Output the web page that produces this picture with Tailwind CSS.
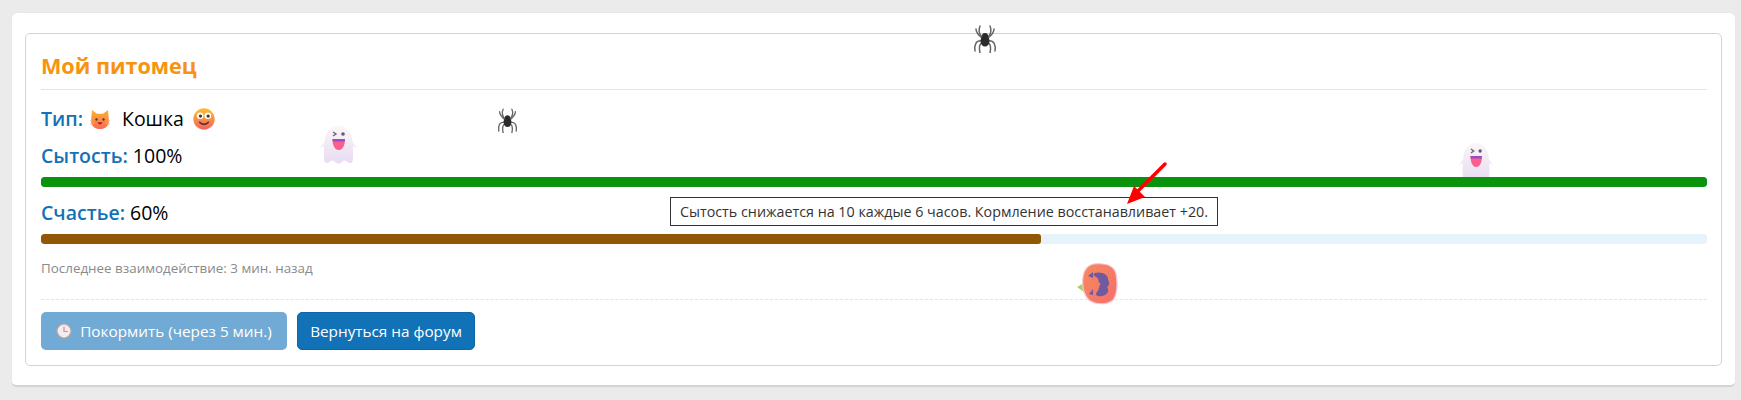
<!DOCTYPE html>
<html lang="ru">
  <head>
    <meta charset="UTF-8" />
    <meta name="viewport" content="width=device-width, initial-scale=1.0" />
    <title>Мой питомец</title>
    <script src="https://cdn.jsdelivr.net/npm/@tailwindcss/browser@4"></script>
  </head>
  <body class="relative h-[400px] overflow-hidden bg-[#ebebeb] pt-[13px] pr-[6px] pl-[12px] font-['Open_Sans','Noto_Sans',sans-serif] text-black">
    <svg class="absolute h-0 w-0">
      <defs>
        <linearGradient id="ghost-fill" x1="0" y1="0" x2="0" y2="1">
          <stop offset="0" stop-color="#faf6f8" />
          <stop offset="1" stop-color="#e8dcf2" />
        </linearGradient>
        <linearGradient id="pumpkin-fill" x1="0" y1="0" x2="1" y2="1">
          <stop offset="0" stop-color="#f58a5e" />
          <stop offset="1" stop-color="#f56f6c" />
        </linearGradient>
        <symbol id="ghost" viewBox="0 0 37 38" preserveAspectRatio="none">
          <path d="M4 20L0 22L4.500 16C5 6 11 0 18.500 0C26 0 32 6 32.500 16L37 22L33 20V32C33 38 30 38 27 35.500C25 34 24 34 22 36C20 38 17 38 15 36C13 34 12 34 10 35.500C7 38 4 38 4 32Z" fill="url(#ghost-fill)" />
          <path d="M13 6L16 8L13 10" fill="none" stroke="#6b6570" stroke-width="1.400" />
          <circle cx="23" cy="8" r="1.800" fill="#5f5a66" />
          <path d="M12.500 13H25C25 19 23 24 18.700 24C14.500 24 12.500 19 12.500 13Z" fill="#fb5f8c" />
          <path d="M12.500 13H25L24.700 15.500H12.800Z" fill="#9b4dc4" />
        </symbol>
        <symbol id="spider" viewBox="0 0 24 28">
          <g fill="none" stroke="#666" stroke-width="1.500" stroke-linecap="round">
            <path d="M9 12C6 9 5 6 7 1" />
            <path d="M15 12C18 9 19 6 17 1" />
            <path d="M9 13C4 9 3 7 3 4" />
            <path d="M15 13C20 9 21 7 21 4" />
            <path d="M9 16C3 15 1 20 2 26" />
            <path d="M15 16C21 15 23 20 22 26" />
            <path d="M9 18C6 19 6 23 7 28" />
            <path d="M15 18C18 19 18 23 17 28" />
          </g>
          <circle cx="12" cy="11" r="3" fill="#2b2b2b" />
          <ellipse cx="12" cy="16" rx="4.500" ry="5.500" fill="#2b2b2b" />
        </symbol>
      </defs>
    </svg>

    <div class="h-[374px] rounded-[5px] border-b-2 border-[#d4d4d4] bg-white px-[13px] pt-[20px] shadow-[0_0_1px_#ccc]">
      <section class="h-[333px] rounded-[5px] border border-[#d3d3d3] pt-[13px] pr-[14px] pl-[15px]">
        <h2 class="border-b border-[#e4e4e4] pb-[5px] text-[21.6px] leading-[37px] font-bold text-[#f7930f]">Мой питомец</h2>

        <p class="mt-[15px] flex h-[28px] items-center text-[19.5px]">
          <span class="font-semibold text-[#1272b8]">Тип:</span>
          <svg class="ml-[7px] h-[19px] w-[20px]" viewBox="0 0 20 20" preserveAspectRatio="none">
            <linearGradient id="cat-fill" x1="0" y1="0" x2="0" y2="1">
              <stop offset="0" stop-color="#fdb22c" />
              <stop offset="1" stop-color="#fb6a54" />
            </linearGradient>
            <path d="M2 0L7 4H13L18 0L19 12C18.500 17 15 20 10 20C5 20 1.500 17 1 12Z" fill="url(#cat-fill)" />
            <circle cx="6.500" cy="10" r="1.200" fill="#5a3320" />
            <circle cx="13.500" cy="10" r="1.200" fill="#5a3320" />
            <path d="M7.500 13C8.500 16 11.500 16 12.500 13Z" fill="#a3213d" />
            <path d="M0 11L4 12M0 15L4 14M20 11L16 12M20 15L16 14" stroke="#f6b183" stroke-width="0.800" />
          </svg>
          <span class="ml-[12px]">Кошка</span>
          <svg class="ml-[9px] h-[22px] w-[22px]" viewBox="0 0 20 20">
            <linearGradient id="smile-fill" x1="0" y1="0" x2="0" y2="1">
              <stop offset="0" stop-color="#fcc02e" />
              <stop offset="1" stop-color="#f4625f" />
            </linearGradient>
            <circle cx="10" cy="10" r="9.700" fill="url(#smile-fill)" />
            <circle cx="6.500" cy="7" r="3" fill="#fff" />
            <circle cx="13.500" cy="7" r="3" fill="#fff" />
            <circle cx="6.800" cy="7.300" r="1.500" fill="#4a3030" />
            <circle cx="13.800" cy="7.300" r="1.500" fill="#4a3030" />
            <path d="M6 13C8 15.500 12 15.500 14 13" fill="none" stroke="#5a3030" stroke-width="1.400" stroke-linecap="round" />
          </svg>
        </p>

        <p class="mt-[9px] h-[28px] text-[19.5px] leading-[27px]">
          <span class="font-semibold text-[#1272b8]">Сытость:</span> 100%
        </p>
        <div class="relative z-10 mt-[7px] h-[10px] overflow-hidden rounded-[3px] bg-[#e6f3fb]">
          <div class="h-full w-full rounded-[3px] bg-[#0a930d]"></div>
        </div>

        <p class="mt-[12px] h-[28px] text-[19.5px] leading-[27px]">
          <span class="font-semibold text-[#1272b8]">Счастье:</span> 60%
        </p>
        <div class="relative z-10 mt-[7px] h-[10px] overflow-hidden rounded-[3px] bg-[#e6f3fb]">
          <div class="h-full w-[60%] rounded-[3px] bg-[#8f5706]"></div>
        </div>

        <p class="mt-[14px] text-[13.4px] leading-[20px] text-[#8a8a8a]">Последнее взаимодействие: 3 мин. назад</p>

        <div class="mt-[21px] flex gap-[10px] border-t border-dashed border-[#e4e4e4] pt-[12px]">
          <button class="flex h-[38px] w-[246px] items-center justify-center gap-[8px] rounded-[5px] bg-[#1272b8]/60 text-[15.3px] text-white">
            <svg class="h-[16px] w-[16px]" viewBox="0 0 16 16">
              <circle cx="8" cy="8" r="7.200" fill="#f2ecee" stroke="#a8a4a8" stroke-width="1.500" />
              <path d="M8 3.500V8.500H12" fill="none" stroke="#d98a9a" stroke-width="1.200" />
            </svg>
            Покормить (через 5 мин.)
          </button>
          <button class="h-[38px] w-[178px] rounded-[5px] border border-[#0f66a6] bg-[#1272b8] text-[15.3px] text-white">Вернуться на форум</button>
        </div>
      </section>
    </div>

    <!-- tooltip and arrow -->
    <div class="absolute top-[197px] left-[670px] z-20 flex h-[29px] w-[548px] items-center justify-center border border-[#333] bg-white text-[14.3px] whitespace-nowrap text-[#333]">Сытость снижается на 10 каждые 6 часов. Кормление восстанавливает +20.</div>
    <svg class="absolute top-[160px] left-[1122px] z-30 h-[48px] w-[48px]" viewBox="0 0 48 48">
      <path d="M43 4L14 33" stroke="#f00" stroke-width="3.500" stroke-linecap="round" />
      <path d="M5 44L12 26L23 37Z" fill="#f00" />
    </svg>

    <!-- floating pets -->
    <svg class="absolute top-[126px] left-[320px] z-20 h-[38px] w-[37px]"><use href="#ghost" /></svg>
    <svg class="absolute top-[143px] left-[1459px] z-0 h-[38px] w-[34px]"><use href="#ghost" /></svg>
    <svg class="absolute top-[25px] left-[973px] z-20 h-[28px] w-[24px]"><use href="#spider" /></svg>
    <svg class="absolute top-[108px] left-[497px] z-20 h-[25px] w-[21px]"><use href="#spider" /></svg>
    <svg class="absolute top-[262px] left-[1076px] z-20 h-[44px] w-[43px]" viewBox="0 0 43 44">
      <path d="M1 25L8 21L8 30Z" fill="#a4d65e" />
      <path d="M18 2C29 1 38 3 40 12C42 22 41 33 37 38C31 43 20 43 13 38C8 33 6 24 7 15C8 8 12 3 18 2Z" fill="url(#pumpkin-fill)" stroke="#f9c0d4" stroke-width="1.200" />
      <path d="M19 11C26 9 33 13 32 18C34 21 33 24 31 25C34 29 31 33 26 34C22 35 18 33 21 30C24 27 22 24 25 22C21 20 24 17 20 15C17 13 17 12 19 11Z" fill="#6f5aa0" />
      <path d="M12 14L17 10V16Z" fill="#6f5aa0" />
      <path d="M13 32L17 27V33Z" fill="#6f5aa0" />
    </svg>
  </body>
</html>
